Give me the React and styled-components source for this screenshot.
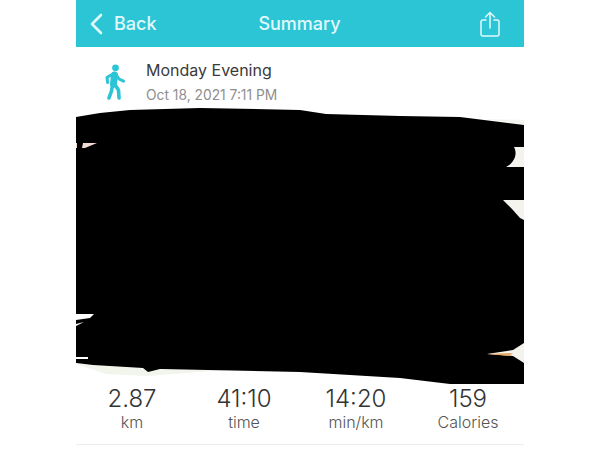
import React from "react";
import styled, { createGlobalStyle } from "styled-components";

const GlobalStyle = createGlobalStyle`
  html, body {
    margin: 0;
    padding: 0;
    background: #fff;
    font-family: "Inter", "Liberation Sans", sans-serif;
  }
`;

const Screen = styled.div`
  width: 448px;
  height: 450px;
  margin: 0 auto;
  overflow: hidden;
  background: #fff;
`;

const Header = styled.header`
  height: 47px;
  background: #2cc5d6;
  color: #e2f9fb;
  display: grid;
  grid-template-columns: 1fr auto 1fr;
  align-items: center;
  padding: 0 24px 0 13px;
`;

const BackLink = styled.div`
  display: flex;
  align-items: center;
  gap: 11px;
  font-size: 18px;
  font-weight: 500;
`;

const Title = styled.div`
  font-size: 18px;
  font-weight: 500;
  margin-left: 10px;
`;

const ShareButton = styled.div`
  display: flex;
  justify-content: flex-end;
`;

const Activity = styled.div`
  box-sizing: border-box;
  height: 61px;
  display: flex;
  align-items: center;
  gap: 20px;
  padding: 9px 0 0 28px;
`;

const ActivityText = styled.div`
  display: flex;
  flex-direction: column;
  gap: 7px;
`;

const ActivityName = styled.div`
  font-size: 16px;
  line-height: 20px;
  color: #3a3a3a;
`;

const ActivityDate = styled.div`
  font-size: 13.8px;
  line-height: 17px;
  color: #8e8e8e;
`;

const MapArea = styled.svg`
  display: block;
  width: 448px;
  height: 276px;
`;

const Stats = styled.div`
  display: grid;
  grid-template-columns: repeat(4, 1fr);
  padding: 0 0 12px;
  border-bottom: 1px solid #ececec;
`;

const Stat = styled.div`
  display: flex;
  flex-direction: column;
  align-items: center;
`;

const StatValue = styled.div`
  font-size: 24px;
  line-height: 29px;
  font-weight: 300;
  color: #333;
`;

const StatLabel = styled.div`
  font-size: 16px;
  line-height: 19px;
  font-weight: 300;
  color: #555;
`;

const stats = [
  { value: "2.87", label: "km" },
  { value: "41:10", label: "time" },
  { value: "14:20", label: "min/km" },
  { value: "159", label: "Calories" },
];

const Chevron = () => (
  <svg width="14" height="22" viewBox="0 0 14 22" fill="none">
    <path d="M12 2 3 11l9 9" stroke="#e2f9fb" strokeWidth="2.6" strokeLinecap="round" strokeLinejoin="round" />
  </svg>
);

const ShareIcon = () => (
  <svg width="20" height="26" viewBox="0 0 20 26" fill="none" stroke="#e2f9fb" strokeWidth="1.5" strokeLinecap="round" strokeLinejoin="round">
    <path d="M6 9H3a2 2 0 0 0-2 2v12a2 2 0 0 0 2 2h14a2 2 0 0 0 2-2V11a2 2 0 0 0-2-2h-3" />
    <path d="M10 17V1.5M5.5 6 10 1.5 14.5 6" />
  </svg>
);

const WalkerIcon = () => (
  <svg width="22" height="36" viewBox="0 0 22 36" fill="none" stroke="#2cc5d6" strokeLinecap="round" strokeLinejoin="round">
    <circle cx="11.5" cy="3.8" r="3.4" fill="#2cc5d6" stroke="none" />
    <path d="M10.5 11 9.5 20" strokeWidth="7" />
    <path d="M7 11 3 13.5 3.6 18.5" strokeWidth="3" />
    <path d="M12 10.5 15 15 19.5 17.2" strokeWidth="3" />
    <path d="M8.5 21 7.5 27 5 34" strokeWidth="3.6" />
    <path d="M11 21 14.5 26 15 34" strokeWidth="3.6" />
  </svg>
);

// the map is hidden behind a hand drawn black scribble, only a few edges show
const Scribble = () => (
  <MapArea viewBox="0 0 448 276">
    <path d="M410 11 448 12V17Z" fill="#f5f3ed" />
    <path d="M0 256 90 262 150 262 70 268 30 266Z" fill="#f1f5ec" />
    <path d="M0 9 24 5 54 2 124 0 224 2 250 6 324 8 384 9 424 14 448 17V276H374L324 270 224 264 84 261 72 264 67 260 17 257 0 255Z" fill="#000" />
    <path d="M448 39H438C442 46 438 55 430 59H448Z" fill="#f5f3ed" />
    <path d="M427 92H448V112L444 110 436 101Z" fill="#f5f3ed" />
    <path d="M448 235 437 242 411 246 437 248 448 255Z" fill="#f5f3ed" />
    <path d="M411 246 437 245 433 248Z" fill="#e8a860" />
    <path d="M0 206H18L14 210 0 212Z" fill="#fff" />
    <path d="M0 216 8 214 0 218Z" fill="#fff" />
    <path d="M0 249H12V251H0Z" fill="#fff" />
    <path d="M0 35H1V40H0ZM7 35H21L9 40H6Z" fill="#f3dcd2" />
  </MapArea>
);

export default function App() {
  return (
    <>
      <GlobalStyle />
      <Screen>
        <Header>
          <BackLink>
            <Chevron />
            Back
          </BackLink>
          <Title>Summary</Title>
          <ShareButton>
            <ShareIcon />
          </ShareButton>
        </Header>
        <Activity>
          <WalkerIcon />
          <ActivityText>
            <ActivityName>Monday Evening</ActivityName>
            <ActivityDate>Oct 18, 2021 7:11 PM</ActivityDate>
          </ActivityText>
        </Activity>
        <Scribble />
        <Stats>
          {stats.map((s) => (
            <Stat key={s.label}>
              <StatValue>{s.value}</StatValue>
              <StatLabel>{s.label}</StatLabel>
            </Stat>
          ))}
        </Stats>
      </Screen>
    </>
  );
}
